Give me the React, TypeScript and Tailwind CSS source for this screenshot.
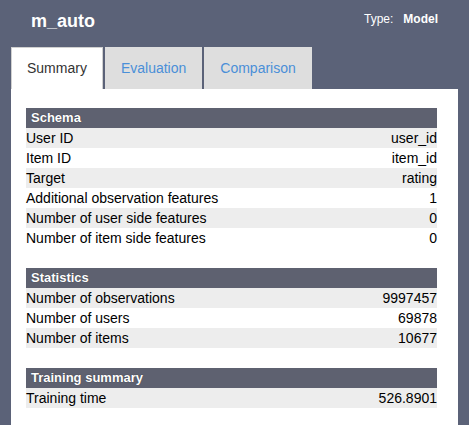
import React from "react";

type Row = [string, string];

const sections: { title: string; rows: Row[] }[] = [
  {
    title: "Schema",
    rows: [
      ["User ID", "user_id"],
      ["Item ID", "item_id"],
      ["Target", "rating"],
      ["Additional observation features", "1"],
      ["Number of user side features", "0"],
      ["Number of item side features", "0"],
    ],
  },
  {
    title: "Statistics",
    rows: [
      ["Number of observations", "9997457"],
      ["Number of users", "69878"],
      ["Number of items", "10677"],
    ],
  },
  {
    title: "Training summary",
    rows: [["Training time", "526.8901"]],
  },
];

function Section({ title, rows }: { title: string; rows: Row[] }) {
  return (
    <div className="mb-[20px]">
      <div className="h-[20px] bg-[#5e6170] pl-[5px] text-[13px] leading-[20px] font-bold text-white [text-shadow:0_0_1px_rgba(0,0,0,0.5)]">
        {title}
      </div>
      {rows.map(([k, v], i) => (
        <div
          key={k}
          className={
            "flex h-[20px] justify-between text-[14px] leading-[20px] text-black " +
            (i % 2 === 0 ? "bg-[#ededed]" : "bg-white")
          }
        >
          <span>{k}</span>
          <span>{v}</span>
        </div>
      ))}
    </div>
  );
}

export default function App() {
  return (
    <div className="w-[469px] h-[425px] overflow-hidden bg-[#5b6278] font-['Liberation_Sans',Arial,sans-serif]">
      <div className="flex h-[47px] justify-between pl-[31px] pr-[31px]">
        <div className="pt-[11px] text-[18px] leading-[20px] font-bold text-white">m_auto</div>
        <div className="flex gap-[10px] pt-[12px] text-[12px] leading-[14px] text-white">
          <span>Type:</span>
          <span className="font-bold">Model</span>
        </div>
      </div>
      <div className="flex h-[42px] gap-[2px] pl-[11px]">
        <div className="border border-b-0 border-[#d0d0d0] bg-white px-[15px] pt-[10px] pb-[11px] text-[14px] leading-[20px] text-[#333333]">
          Summary
        </div>
        <div className="border border-b-0 border-[#dedede] bg-[#dedede] px-[15px] pt-[10px] pb-[11px] text-[14px] leading-[20px] text-[#4a8fd8]">
          Evaluation
        </div>
        <div className="border border-b-0 border-[#dedede] bg-[#dedede] px-[15px] pt-[10px] pb-[11px] text-[14px] leading-[20px] text-[#4a8fd8]">
          Comparison
        </div>
      </div>
      <div className="ml-[11px] h-[336px] w-[447px] bg-white pt-[19px] pl-[15px] pr-[21px]">
        {sections.map((s) => (
          <Section key={s.title} title={s.title} rows={s.rows} />
        ))}
      </div>
    </div>
  );
}
